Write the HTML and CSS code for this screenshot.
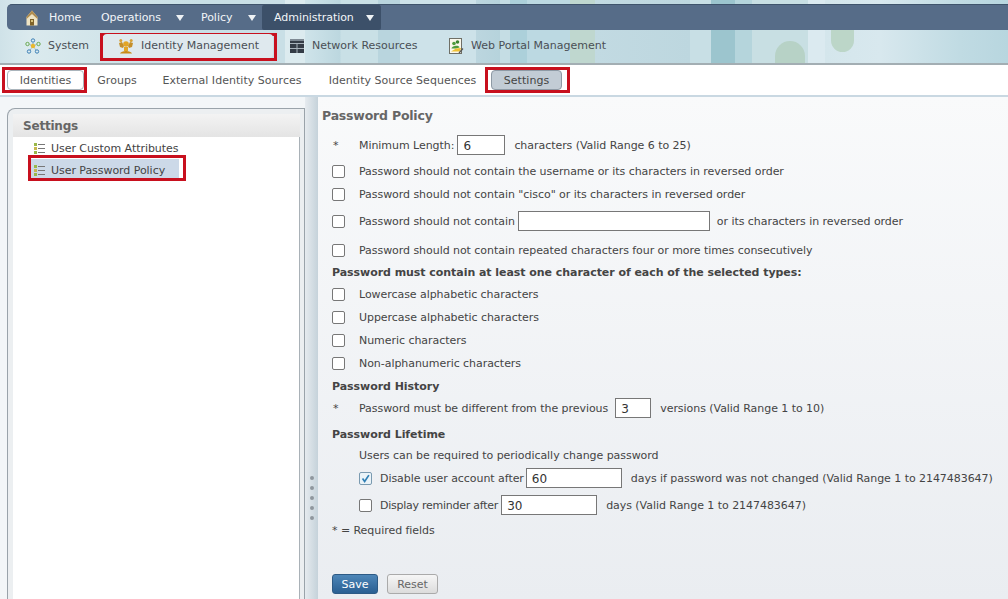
FILE: index.html
```html
<!DOCTYPE html>
<html lang="en">
<head>
<meta charset="utf-8">
<title>Password Policy</title>
<link rel="stylesheet" href="styles.css">
</head>
<body>
<header class="masthead">
  <nav class="topnav">
    <a class="top home"><svg class="ico-home" viewBox="0 0 16 16"><path d="M8 0.5 L13.5 7 V15.5 H2.5 V7 Z" fill="#efe4c4"/><path d="M8 0.5 L2.5 7 V9 L8 4 L13.5 9 V7 Z" fill="#b08c4e"/><rect x="6" y="9" width="4" height="6.5" fill="#7f6228"/><rect x="7" y="10" width="2" height="2" fill="#d8c27a"/></svg><span>Home</span></a>
    <a class="top ops">Operations<i class="caret caret-ops"></i></a>
    <a class="top pol">Policy<i class="caret caret-pol"></i></a>
    <a class="top admin">Administration<i class="caret"></i></a>
  </nav>
  <nav class="secnav">
    <a class="sec sys"><svg class="ico" viewBox="0 0 16 16"><path d="M8 8 L8 3 M8 8 L3 6 M8 8 L13 6 M8 8 L4.5 13 M8 8 L11.500 13" stroke="#7f9aa8" stroke-width="1" stroke-dasharray="1 1"/><circle cx="8" cy="2.500" r="1.700" fill="#dcecf2" stroke="#3d7fb5"/><circle cx="2.500" cy="6" r="1.700" fill="#dcecf2" stroke="#6aa84f"/><circle cx="13.500" cy="6" r="1.700" fill="#dcecf2" stroke="#6aa84f"/><circle cx="4" cy="13.500" r="1.700" fill="#dcecf2" stroke="#3d7fb5"/><circle cx="12" cy="13.500" r="1.700" fill="#dcecf2" stroke="#3d7fb5"/><circle cx="8" cy="8" r="2.200" fill="#e8b830"/></svg>System</a>
    <a class="sec idm"><svg class="ico" viewBox="0 0 16 16"><circle cx="8" cy="6" r="2.800" fill="#e2a526"/><path d="M2 15.500 C3 12 13 12 14 15.500 Z" fill="#c98a18"/><path d="M6 9 H10 V13 H6 Z" fill="#e2a526"/><circle cx="2.800" cy="2.500" r="1.500" fill="#d8a033"/><circle cx="13.200" cy="2.500" r="1.500" fill="#d8a033"/><path d="M1 5 L4 4 L6 8 L5 10 L2 9 Z M15 5 L12 4 L10 8 L11 10 L14 9 Z" fill="#c58f2a"/></svg>Identity Management</a>
    <a class="sec net"><svg class="ico" viewBox="0 0 16 16"><rect x="1" y="1" width="14" height="14" fill="#343c46"/><path d="M1 5.500H15M1 10.500H15M8 5.500V15" stroke="#a8b3bb" stroke-width="1"/><rect x="1" y="1" width="14" height="2" fill="#7f8a94"/></svg>Network Resources</a>
    <a class="sec web"><svg class="ico" viewBox="0 0 16 16"><rect x="1.500" y="0.500" width="12" height="15" fill="#faf8ec" stroke="#6f6f66" stroke-width="1"/><circle cx="6" cy="5.500" r="1.800" fill="#4f9c3c"/><circle cx="9.500" cy="4" r="1.800" fill="#3a8530"/><path d="M3.500 10.500 C3.500 7.500 11.500 6.500 11.500 9.500 L8 10.500 Z" fill="#4f9c3c"/><path d="M3 13.500 L8 10.500 L13 10 L12 13.500 Z" fill="#eec033"/><path d="M11 15 L15 10.500" stroke="#555" stroke-width="1.200"/></svg>Web Portal Management</a>
  </nav>
</header>
<nav class="tabs">
  <a class="tab t-id">Identities</a>
  <a class="tab t-gr">Groups</a>
  <a class="tab t-ext">External Identity Sources</a>
  <a class="tab t-seq">Identity Source Sequences</a>
  <a class="tab t-set">Settings</a>
</nav>
<main class="workspace">
  <aside class="sidebar">
    <h2 class="side-head">Settings</h2>
    <ul class="tree">
      <li class="leaf"><svg class="ico-list" viewBox="0 0 12 13"><path d="M5 2.500H12M5 6.500H12M5 10.500H12" stroke="#777" stroke-width="1"/><rect x="1" y="1" width="3" height="3" fill="#9ab84a"/><rect x="1" y="5" width="3" height="3" fill="#c8b850"/><rect x="1" y="9" width="3" height="3" fill="#9ab84a"/></svg>User Custom Attributes</li>
      <li class="leaf selected"><svg class="ico-list" viewBox="0 0 12 13"><path d="M5 2.500H12M5 6.500H12M5 10.500H12" stroke="#777" stroke-width="1"/><rect x="1" y="1" width="3" height="3" fill="#9ab84a"/><rect x="1" y="5" width="3" height="3" fill="#c8b850"/><rect x="1" y="9" width="3" height="3" fill="#9ab84a"/></svg>User Password Policy</li>
    </ul>
  </aside>
  <div class="splitter"><span class="grip"></span><span class="grip"></span><span class="grip"></span><span class="grip"></span><span class="grip"></span></div>
  <section class="content">
    <h1 class="title">Password Policy</h1>
    <div class="row r1"><span class="mark">*</span><span class="lbl">Minimum Length:</span><span class="field f-min">6</span><span class="after">characters (Valid Range 6 to 25)</span></div>
    <div class="row r2"><span class="box"></span><span>Password should not contain the username or its characters in reversed order</span></div>
    <div class="row r3"><span class="box"></span><span>Password should not contain "cisco" or its characters in reversed order</span></div>
    <div class="row r4"><span class="box"></span><span>Password should not contain</span><span class="field f-word"></span><span class="after">or its characters in reversed order</span></div>
    <div class="row r5"><span class="box"></span><span>Password should not contain repeated characters four or more times consecutively</span></div>
    <h3 class="sub s1">Password must contain at least one character of each of the selected types:</h3>
    <div class="row r6"><span class="box"></span><span>Lowercase alphabetic characters</span></div>
    <div class="row r7"><span class="box"></span><span>Uppercase alphabetic characters</span></div>
    <div class="row r7"><span class="box"></span><span>Numeric characters</span></div>
    <div class="row r7"><span class="box"></span><span>Non-alphanumeric characters</span></div>
    <h3 class="sub s2">Password History</h3>
    <div class="row r8"><span class="mark">*</span><span class="lbl">Password must be different from the previous</span><span class="field f-hist">3</span><span class="after">versions (Valid Range 1 to 10)</span></div>
    <h3 class="sub s3">Password Lifetime</h3>
    <div class="row r9"><span class="indent">Users can be required to periodically change password</span></div>
    <div class="row r10 nested"><span class="box checked"><svg viewBox="0 0 13 13"><path d="M3 6.500 L5.500 10 L10.500 2.500" fill="none" stroke="#2f7fb5" stroke-width="2"/></svg></span><span class="lbl">Disable user account after</span><span class="field f-dis">60</span><span class="after">days if password was not changed (Valid Range 1 to 2147483647)</span></div>
    <div class="row r11 nested"><span class="box"></span><span class="lbl tight">Display reminder after</span><span class="field f-rem">30</span><span class="after">days (Valid Range 1 to 2147483647)</span></div>
    <p class="req">* = Required fields</p>
    <div class="actions"><button class="btn save">Save</button><button class="btn reset">Reset</button></div>
  </section>
</main>
<div class="hl hl-idm"></div>
<div class="hl hl-identities"></div>
<div class="hl hl-settings"></div>
<div class="hl hl-policy"></div>
</body>
</html>
```
FILE: styles.css
```css
* { box-sizing: border-box; }
html, body { margin: 0; height: 599px; overflow: hidden; }
body {
  position: relative;
  font-family: "DejaVu Sans", sans-serif;
  font-size: 11px;
  letter-spacing: -0.05px;
  color: #444;
  background: #fff;
}
.masthead {
  position: relative;
  height: 65px;
  padding: 4px 0 0 7px;
  border-bottom: 2px solid #a3aeb3;
  background: linear-gradient(90deg,
    #cfe2e8 0, #d6e7ec 16px, #dbeaee 30px, #d2e5ea 100px, #c8dfe6 200px, #c9dfe6 285px,
    #dcebef 285px, #dcebef 305px, #cfe4ea 305px, #bcd7df 340px, #c9e0e6 341px, #c9e0e6 378px,
    #b9d5de 378px, #b9d5de 400px, #cde2e9 400px, #cde2e9 476px,
    #bcd6df 476px, #b6d3dc 500px, #c5dde4 500px, #c5dde4 510px, #acd0da 510px, #acd0da 527px,
    #bcd9e2 527px, #bcd9e2 570px, #bfd7cf 570px, #bfd7cf 595px, #c2dae2 595px, #bdd7df 690px,
    #c8dfe5 690px, #c8dfe5 711px, #9cc5ce 711px, #9cc5ce 735px, #b5d5dc 735px, #b5d5dc 752px,
    #c8dfe3 752px, #c8dfe3 808px, #dbeaf0 808px, #dbeaf0 825px, #d4e6ec 825px, #d8e8ee 880px, #c0dbe3 960px, #b8d6df 1008px);
}
.masthead::before {
  content: "";
  position: absolute;
  left: 775px;
  top: 41px;
  width: 30px;
  height: 22px;
  background: #b7d2c6;
  border-radius: 15px 15px 0 0;
}
.masthead::after {
  content: "";
  position: absolute;
  left: 831px;
  top: 28px;
  width: 23px;
  height: 24px;
  background: #bcd6c8;
  border-radius: 0 0 12px 12px;
}
.topnav {
  position: relative;
  z-index: 1;
  display: flex;
  height: 26px;
  background: #566c88;
  border-top: 1px solid #3f546c;
  border-radius: 5px 0 0 5px;
  color: #f2f5f8;
  padding-left: 17px;
  align-items: center;
}
.top { display: flex; align-items: center; height: 25px; color: #f2f5f8; }
.ico-home { width: 16px; height: 16px; margin-right: 9px; }
.home { width: 77px; }
.ops { width: 100px; }
.pol { width: 61px; }
.admin { width: 119px; background: #3c5069; padding-left: 12px; border-radius: 2px; }
.caret {
  margin-left: auto;
  margin-right: 7px;
  width: 0;
  height: 0;
  border-left: 4px solid transparent;
  border-right: 4px solid transparent;
  border-top: 6px solid #eef2f5;
}
.caret-ops { margin-right: 17px; }
.caret-pol { margin-right: 6px; }
.secnav { position: relative; z-index: 1; display: flex; height: 31px; padding-left: 18px; align-items: center; color: #4a4f55; letter-spacing: 0; }
.sec { display: flex; align-items: center; height: 24px; }
.ico { width: 16px; height: 16px; margin-right: 7px; }
.sys { width: 78px; }
.idm {
  width: 170px;
  padding-left: 15px;
  background: #dfe9ee;
  border-radius: 4px;
  margin-right: 16px;
}
.net { width: 159px; }
.tabs {
  display: flex;
  height: 32px;
  align-items: center;
  border-bottom: 2px solid #c9d8e2;
  padding-left: 7px;
  color: #555;
  letter-spacing: 0.03px;
}
.tab { display: block; height: 20px; line-height: 20px; text-align: center; border-radius: 4px; border: 1px solid transparent; }
.t-id { width: 77px; background: #fff; border-color: #aab4bb; }
.t-gr { width: 66px; }
.t-ext { width: 164px; }
.t-seq { width: 177px; }
.t-set { width: 71px; background: #c2ccd5; border-color: #8e9aa5; color: #444; }
.workspace { display: flex; height: 502px; background: #f3f6f8; }
.sidebar {
  display: flex;
  flex-direction: column;
  flex: none;
  width: 298px;
  margin: 11px 0 0 7px;
  padding: 5px 4px 0 5px;
  background: #eceff1;
  border: 1px solid #9aa3aa;
  border-bottom: 0;
  border-radius: 8px 0 0 0;
}
.side-head {
  margin: 0;
  height: 23px;
  line-height: 25px;
  padding-left: 10px;
  font-size: 12px;
  font-weight: bold;
  letter-spacing: -0.2px;
  color: #666;
  background: linear-gradient(#f3f3f3, #e4e4e4);
}
.tree { flex: 1; list-style: none; margin: 0; padding: 0; background: #fff; border-right: 1px solid #a9b1b7; }
.leaf { display: flex; align-items: center; height: 22px; margin-left: 18px; padding-left: 2px; width: 148px; white-space: nowrap; }
.selected { background: #ccd9e8; }
.ico-list { width: 12px; height: 13px; margin-right: 6px; }
.splitter {
  flex: none;
  width: 13px;
  background: linear-gradient(90deg, #e6ebef, #c5d2da);
  display: flex;
  flex-direction: column;
  align-items: center;
  gap: 6px;
  padding-top: 379px;
}
.grip { width: 4px; height: 4px; border-radius: 50%; background: #8f979e; }
.content { flex: 1; padding: 10px 0 0 14px; background: linear-gradient(#f9fafb, #eaedf1); min-width: 0; }
.title { margin: 0 0 0 -10px; font-size: 12.5px; font-weight: bold; color: #666; height: 18px; line-height: 18px; letter-spacing: -0.2px; }
.row { display: flex; align-items: center; white-space: nowrap; height: 20px; }
.mark { width: 27px; padding-left: 1px; }
.box {
  flex: none;
  width: 13px;
  height: 13px;
  margin-right: 14px;
  border: 1px solid #777;
  border-radius: 2px;
  background: #fff;
}
.box svg { display: block; width: 11px; height: 11px; }
.checked { border-color: #7a9ab0; background: #eaf3f8; }
.tight { letter-spacing: -0.25px; }
.field {
  display: block;
  height: 20px;
  line-height: 21px;
  padding-left: 5px;
  background: #fff;
  border: 1px solid #777;
  color: #333;
  font-size: 12px;
}
.f-min { width: 48px; margin-left: 3px; margin-right: 9px; }
.f-word { width: 192px; margin-left: 3px; margin-right: 7px; }
.f-hist { width: 36px; margin-left: 7px; margin-right: 9px; }
.f-dis { width: 96px; margin-left: 2px; margin-right: 9px; }
.f-rem { width: 96px; margin-left: 3px; margin-right: 9px; }
.r1 { margin-top: 10px; }
.r2 { margin-top: 6px; }
.r3 { margin-top: 3px; }
.r4 { margin-top: 7px; }
.r5 { margin-top: 9px; }
.r6 { margin-top: 1px; }
.r7 { margin-top: 3px; }
.r8 { margin-top: 1px; }
.r9 { margin-top: 0; }
.r10 { margin-top: 3px; }
.r11 { margin-top: 7px; }
.indent { margin-left: 27px; }
.nested { padding-left: 27px; }
.nested .box { margin-right: 8px; }
.sub { margin: 0; font-size: 11px; font-weight: bold; color: #444; height: 20px; line-height: 20px; }
.s1 { margin-top: 3px; }
.s2 { margin-top: 4px; }
.s3 { margin-top: 7px; }
.req { margin: 7px 0 0 0; height: 18px; line-height: 18px; }
.actions { display: flex; gap: 9px; margin-top: 34px; }
.btn {
  font-family: inherit;
  font-size: 11px;
  letter-spacing: -0.05px;
  height: 20px;
  padding: 0;
  border-radius: 3px;
}
.save { width: 46px; color: #fff; background: linear-gradient(#4d86b8, #2a5f92); border: 1px solid #2d5a85; }
.reset { width: 51px; color: #666; background: linear-gradient(#f6f6f6, #dcdcdc); border: 1px solid #aaa; }
.hl { position: absolute; border: 3px solid #c8101e; pointer-events: none; }
.hl-idm { left: 100px; top: 33px; width: 177px; height: 28px; }
.hl-identities { left: 2px; top: 67px; width: 85px; height: 26px; }
.hl-settings { left: 485px; top: 67px; width: 85px; height: 26px; }
.hl-policy { left: 28px; top: 155px; width: 158px; height: 26px; }
```
